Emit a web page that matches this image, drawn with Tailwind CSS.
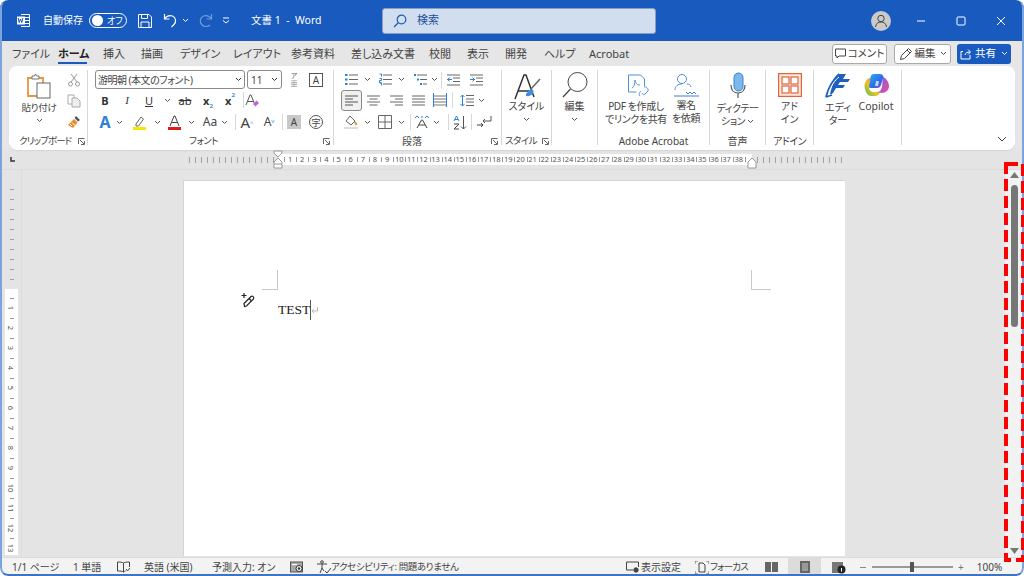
<!DOCTYPE html>
<html lang="ja">
<head>
<meta charset="utf-8">
<title>文書 1 - Word</title>
<script src="https://cdn.jsdelivr.net/npm/@tailwindcss/browser@4"></script>
</head>
<body class="bg-white">
<div class="relative w-[1024px] h-[576px] overflow-hidden flex flex-col bg-[#e4e4e4] rounded-[8px] font-['Noto_Sans','Noto_Sans_CJK_JP',sans-serif] [font-feature-settings:'palt'] text-[#444]">

  <!-- title bar -->
  <header class="h-[41px] shrink-0 flex items-center bg-[#185abd] rounded-t-[8px] text-white text-[10px]">
    <svg class="ml-[16px] w-[15px] h-[15px]" viewBox="0 0 15 15" fill="none" stroke="#fff"><path d="M5 1.500h8.500v12H5"/><path d="M9 4.500h4M9 7.500h4M9 10.500h4"/><rect x="1" y="3.500" width="8" height="8" fill="#fff" stroke="none"/><path d="M2.200 5l1 4.500 1.300-3.500 1.300 3.500 1-4.500" stroke="#185abd"/></svg>
    <span class="ml-[12px] w-[46px] whitespace-nowrap">自動保存</span>
    <span class="w-[38px] h-[15px] rounded-full border border-white flex items-center pl-[2px] gap-[4px]"><span class="w-[11px] h-[11px] rounded-full bg-white"></span><span class="text-[9px] leading-none">オフ</span></span>
    <svg class="ml-[11px] w-[14px] h-[14px]" viewBox="0 0 14 14" fill="none" stroke="#fff"><path d="M.5.5h10.500l2.500 2.500v10.500h-13z"/><path d="M3.500.5v4h6v-4M3 13.500v-5.500h8v5.500"/></svg>
    <svg class="ml-[11px] w-[16px] h-[15px]" viewBox="0 0 16 15" fill="none" stroke="#fff" stroke-width="1.200"><path d="M1.500 1v5h5"/><path d="M1.500 6c2-3 5-4 8-3 3.500 1.500 4 6 1.500 8.500l-2.500 2.500"/></svg>
    <svg class="ml-[3px] w-[7px] h-[5px]" viewBox="0 0 7 5" fill="none" stroke="#fff"><path d="M1 1l2.500 2.500L6 1"/></svg>
    <svg class="ml-[8px] w-[16px] h-[15px] opacity-40" viewBox="0 0 16 15" fill="none" stroke="#fff" stroke-width="1.200"><path d="M14.500 1v5h-5"/><path d="M14.500 6c-2-3-5-4-8-3-3.500 1.500-4.500 6-1.500 9 2 2 6 2 8 0"/></svg>
    <svg class="ml-[9px] w-[8px] h-[7px]" viewBox="0 0 8 7" fill="none" stroke="#fff"><path d="M1 1h6"/><path d="M1 3.500l3 2.500 3-2.500"/></svg>
    <span class="ml-[21px] w-[131px] text-[10.500px] whitespace-nowrap">文書 1&nbsp; -&nbsp; Word</span>
    <div class="w-[274px] h-[26px] flex items-center rounded-[3px] bg-[#d1deef] border border-[#8a9fc0] text-[#1d4e9a] text-[11px]">
      <svg class="ml-[10px] w-[14px] h-[14px]" viewBox="0 0 14 14" fill="none" stroke="#1d5bb5" stroke-width="1.200"><circle cx="8.500" cy="5.500" r="4.300"/><path d="M5.500 8.500L1 13"/></svg>
      <span class="ml-[10px]">検索</span>
    </div>
    <div class="ml-[215px] w-[20px] h-[20px] rounded-full bg-[#cacaca] flex items-center justify-center">
      <svg class="w-[14px] h-[14px]" viewBox="0 0 14 14" fill="none" stroke="#444"><circle cx="7" cy="4.500" r="3.200"/><path d="M1.500 13c.5-3.500 2.500-5 5.500-5s5 1.500 5.500 5"/></svg>
    </div>
    <svg class="ml-[25px] w-[10px] h-[10px]" viewBox="0 0 10 10" stroke="#fff"><path d="M1 5h8"/></svg>
    <svg class="ml-[30px] w-[10px] h-[10px]" viewBox="0 0 10 10" fill="none" stroke="#fff"><rect x="1" y="1" width="8" height="8" rx="1"/></svg>
    <svg class="ml-[30px] w-[10px] h-[10px]" viewBox="0 0 10 10" stroke="#fff"><path d="M1 1l8 8M9 1l-8 8"/></svg>
  </header>

  <!-- tabs -->
  <nav class="h-[25px] shrink-0 flex items-center bg-[#e6e6e6] pl-[12px] pr-[13px] text-[11px] whitespace-nowrap">
    <span class="w-[46px] pt-[1px]">ファイル</span>
    <span class="w-[45px] pt-[1px] font-bold text-[#222] relative">ホーム<span class="absolute left-0 top-[17px] w-[29px] h-[2px] bg-[#185abd]"></span></span>
    <span class="w-[38px] pt-[1px]">挿入</span>
    <span class="w-[39px] pt-[1px]">描画</span>
    <span class="w-[53px] pt-[1px]">デザイン</span>
    <span class="w-[58px] pt-[1px]">レイアウト</span>
    <span class="w-[60px] pt-[1px]">参考資料</span>
    <span class="w-[78px] pt-[1px]">差し込み文書</span>
    <span class="w-[38px] pt-[1px]">校閲</span>
    <span class="w-[38px] pt-[1px]">表示</span>
    <span class="w-[39px] pt-[1px]">開発</span>
    <span class="w-[45px] pt-[1px]">ヘルプ</span>
    <span class="w-[50px] pt-[1px]">Acrobat</span>
    <div class="ml-auto flex items-center text-[10.500px]">
      <span class="w-[55px] h-[20px] rounded-[3px] border border-[#aaa] bg-white flex items-center justify-center gap-[2px]">
        <svg class="w-[11px] h-[11px]" viewBox="0 0 11 11" fill="none" stroke="#444"><path d="M.5 1h10v7H4L2 10V8H.5z"/></svg>コメント
      </span>
      <span class="ml-[7px] w-[57px] h-[20px] rounded-[3px] border border-[#aaa] bg-white flex items-center justify-center gap-[2px]">
        <svg class="w-[14px] h-[14px]" viewBox="0 0 14 14" fill="none" stroke="#444"><path d="M1.500 12.500l1-4 7-7 3 3-7 7z"/><path d="M8 3l3 3"/></svg>編集
        <svg class="ml-[2px] w-[7px] h-[5px]" viewBox="0 0 7 5" fill="none" stroke="#444"><path d="M1 1l2.500 2.500L6 1"/></svg>
      </span>
      <span class="ml-[6px] w-[54px] h-[20px] rounded-[3px] bg-[#185abd] text-white flex items-center justify-center gap-[3px]">
        <svg class="w-[12px] h-[12px]" viewBox="0 0 12 12" fill="none" stroke="#fff"><path d="M3 3.500H1v7.500h9V7"/><path d="M5 7c.5-2 2-3 5-3M8 1.500L10.500 4 8 6.500"/></svg>共有
        <svg class="ml-[2px] w-[7px] h-[5px]" viewBox="0 0 7 5" fill="none" stroke="#fff"><path d="M1 1l2.500 2.500L6 1"/></svg>
      </span>
    </div>
  </nav>

  <!-- ribbon -->
  <div class="h-[84px] shrink-0 bg-[#e6e6e6] px-[9px]">
    <section class="relative h-[84px] rounded-[8px] bg-white pt-[4px] flex text-[10px] leading-none shadow-[0_1px_1px_#d5d5d5]">

      <!-- clipboard -->
      <div class="w-[79px] h-[75px] border-r border-[#d8d8d8] flex flex-col">
        <div class="flex flex-1">
          <div class="w-[60px] flex flex-col items-center">
            <svg class="w-[26px] h-[26px] mt-[3px]" viewBox="0 0 26 26" fill="none"><path d="M2 5h15v18H2z" stroke="#e8953f" stroke-width="1.800"/><path d="M6 5V3h2.500l1-2 1 2H13v3H6z" stroke="#777" fill="#fff"/><rect x="11" y="10" width="13" height="15" fill="#fff" stroke="#666"/></svg>
            <span class="mt-[4px] text-[9.500px] tracking-[-0.300px] whitespace-nowrap">貼り付け</span>
            <svg class="mt-[5px] w-[7px] h-[5px]" viewBox="0 0 7 5" fill="none" stroke="#555"><path d="M1 1l2.500 2.500L6 1"/></svg>
          </div>
          <div class="-ml-[2px] w-[14px] flex flex-col items-center pt-[3px] gap-[7px]">
            <svg class="w-[14px] h-[14px]" viewBox="0 0 14 14" fill="none" stroke="#999"><path d="M4 1l6 8M10 1L4 9"/><circle cx="3.500" cy="11" r="2"/><circle cx="10.500" cy="11" r="2"/></svg>
            <svg class="w-[14px] h-[14px]" viewBox="0 0 14 14" fill="none" stroke="#aaa"><path d="M1 1h6v9H1z"/><path d="M5 4h5l3 3v6H5z" fill="#eee"/></svg>
            <svg class="w-[14px] h-[14px]" viewBox="0 0 14 14"><path d="M9 1l4 4-2 1.500L7.500 3z" fill="#555"/><path d="M7 4l3.500 3.500L6 13 1 10z" fill="#ec8a2e"/><path d="M3 9l2 2M5 7.500l3 3" stroke="#fff"/></svg>
          </div>
        </div>
        <div class="h-[10px] -mb-[1px] flex items-center pl-[10px] whitespace-nowrap text-[9.500px] tracking-[-0.900px]">クリップボード
          <svg class="ml-auto mr-[2px] w-[7px] h-[7px]" viewBox="0 0 7 7" fill="none" stroke="#666"><path d="M.5 6V.5H6.500M2 2l4 4M6.500 3v3.500H3"/></svg>
        </div>
      </div>

      <!-- font -->
      <div class="w-[246px] h-[75px] border-r border-[#d8d8d8] flex flex-col">
        <div class="h-[19px] flex items-center pl-[7px] text-[10px]">
          <span class="w-[150px] h-[19px] rounded-[3px] border border-[#8a8a8a] flex items-center pl-[2px] whitespace-nowrap tracking-[-0.500px]">游明朝 (本文のフォント)<svg class="ml-auto mr-[2px] w-[7px] h-[5px]" viewBox="0 0 7 5" fill="none" stroke="#333"><path d="M1 1l2.500 2.500L6 1"/></svg></span>
          <span class="ml-[2px] w-[35px] h-[19px] rounded-[3px] border border-[#8a8a8a] flex items-center pl-[3px]">11<svg class="ml-auto mr-[3px] w-[7px] h-[5px]" viewBox="0 0 7 5" fill="none" stroke="#333"><path d="M1 1l2.500 2.500L6 1"/></svg></span>
          <span class="ml-[6px] w-[12px] flex flex-col items-center text-[7px] leading-[8px] text-[#666]"><span>ア</span><span class="text-[#999]">亜</span></span>
          <span class="ml-[9px] w-[14px] h-[14px] border border-[#555] text-[10px] flex items-center justify-center">A</span>
        </div>
        <div class="h-[22px] flex items-center pl-[6px] text-[11px] text-[#333]">
          <span class="w-[22px] text-center font-bold">B</span>
          <span class="w-[22px] text-center italic font-['Liberation_Serif',serif]">I</span>
          <span class="w-[22px] text-center underline">U</span>
          <span class="w-[14px] flex justify-center"><svg class="w-[7px] h-[5px]" viewBox="0 0 7 5" fill="none" stroke="#555"><path d="M1 1l2.500 2.500L6 1"/></svg></span>
          <span class="w-[22px] text-center line-through">ab</span>
          <span class="ml-[1px] w-[22px] text-center font-bold">x<sub class="text-[6px] text-[#3a8fe0] align-[-2px]">2</sub></span>
          <span class="w-[22px] text-center font-bold">x<sup class="text-[6px] text-[#3a8fe0] align-[5px]">2</sup></span>
          <span class="ml-[2px] w-[1px] h-[16px] bg-[#d8d8d8]"></span>
          <svg class="ml-[1px] w-[15px] h-[15px]" viewBox="0 0 15 15" fill="none"><path d="M1 12L5 2h1l4 10M2.500 8.500h6" stroke="#555"/><path d="M8 11l3.500-3.500 2.500 2.500L10.500 13.500z" fill="#c262d6"/></svg>
        </div>
        <div class="h-[22px] flex items-center pl-[6px] text-[11px]">
          <span class="w-[22px] text-center text-[16px] font-bold text-[#2f80d8]">A</span>
          <svg class="w-[7px] h-[5px]" viewBox="0 0 7 5" fill="none" stroke="#555"><path d="M1 1l2.500 2.500L6 1"/></svg>
          <span class="ml-[5px] w-[22px] flex justify-center"><svg class="w-[15px] h-[15px]" viewBox="0 0 15 15" fill="none"><path d="M4 9l5-7 2.500 2-5 7H4z" stroke="#666"/><rect x="1" y="12" width="13" height="3" fill="#f7e700"/></svg></span>
          <svg class="ml-[4px] w-[7px] h-[5px]" viewBox="0 0 7 5" fill="none" stroke="#555"><path d="M1 1l2.500 2.500L6 1"/></svg>
          <span class="ml-[2px] w-[22px] flex justify-center"><svg class="w-[15px] h-[15px]" viewBox="0 0 15 15" fill="none"><path d="M3 11l4-10h1l4 10M4.500 7.500h6" stroke="#444"/><rect x="1" y="12" width="13" height="3" fill="#d91c1c"/></svg></span>
          <svg class="ml-[3px] w-[7px] h-[5px]" viewBox="0 0 7 5" fill="none" stroke="#555"><path d="M1 1l2.500 2.500L6 1"/></svg>
          <span class="ml-[4px] w-[22px] text-center text-[12px]">Aa</span>
          <svg class="w-[7px] h-[5px]" viewBox="0 0 7 5" fill="none" stroke="#555"><path d="M1 1l2.500 2.500L6 1"/></svg>
          <span class="ml-[7px] w-[1px] h-[16px] bg-[#d8d8d8]"></span>
          <span class="w-[22px] text-center text-[15px] leading-none">A<sup class="text-[6px] text-[#3a8fe0]">^</sup></span>
          <span class="w-[22px] text-center text-[12px] leading-none">A<sup class="text-[6px] text-[#3a8fe0]">v</sup></span>
          <span class="ml-[2px] w-[1px] h-[16px] bg-[#d8d8d8]"></span>
          <span class="ml-[4px] w-[14px] h-[14px] bg-[#c8c8c8] flex items-center justify-center text-[10px]">A</span>
          <span class="ml-[8px] w-[14px] h-[14px] rounded-full border border-[#555] flex items-center justify-center text-[9px]">字</span>
        </div>
        <div class="h-[10px] -mb-[1px] flex items-center pl-[101px] whitespace-nowrap mt-auto text-[9.500px] tracking-[-0.500px]">フォント
          <svg class="ml-auto mr-[3px] w-[7px] h-[7px]" viewBox="0 0 7 7" fill="none" stroke="#666"><path d="M.5 6V.5H6.500M2 2l4 4M6.500 3v3.500H3"/></svg>
        </div>
      </div>

      <!-- paragraph -->
      <div class="w-[168px] h-[75px] border-r border-[#d8d8d8] flex flex-col">
        <div class="h-[19px] flex items-center pl-[6px]">
          <span class="w-[22px] flex justify-center"><svg class="w-[13px] h-[13px]" viewBox="0 0 13 13" stroke="#666"><path d="M4 2h9M4 6.500h9M4 11h9"/><path d="M0 2h2.500M0 6.500h2.500M0 11h2.500" stroke="#2f80d8" stroke-width="2"/></svg></span>
          <svg class="ml-[2px] w-[7px] h-[5px]" viewBox="0 0 7 5" fill="none" stroke="#555"><path d="M1 1l2.500 2.500L6 1"/></svg>
          <span class="ml-[3px] w-[22px] flex justify-center"><svg class="w-[13px] h-[13px]" viewBox="0 0 13 13" stroke="#666"><path d="M4 2h9M4 6.500h9M4 11h9"/><path d="M.5 1h2v2.500M.5 5.500h2v2h-2v2h2M.5 10h2v2.500" stroke="#2f80d8" fill="none"/></svg></span>
          <svg class="ml-[2px] w-[7px] h-[5px]" viewBox="0 0 7 5" fill="none" stroke="#555"><path d="M1 1l2.500 2.500L6 1"/></svg>
          <span class="ml-[4px] w-[22px] flex justify-center"><svg class="w-[13px] h-[13px]" viewBox="0 0 13 13" stroke="#666"><path d="M3 2h10M6 6.500h7M9 11h4"/><path d="M0 2h2M3 6.500h2M6 11h2" stroke="#2f80d8" stroke-width="2"/></svg></span>
          <svg class="w-[7px] h-[5px]" viewBox="0 0 7 5" fill="none" stroke="#555"><path d="M1 1l2.500 2.500L6 1"/></svg>
          <span class="ml-[3px] w-[1px] h-[16px] bg-[#d8d8d8]"></span>
          <span class="w-[22px] flex justify-center"><svg class="w-[13px] h-[12px]" viewBox="0 0 13 12" stroke="#666" fill="none"><path d="M0 1h13M6 4h7M6 7.500h7M0 11h13"/><path d="M5 5.500H0M2.500 3.500L.5 5.500l2 2" stroke="#2f80d8"/></svg></span>
          <span class="ml-[1px] w-[22px] flex justify-center"><svg class="w-[13px] h-[12px]" viewBox="0 0 13 12" stroke="#666" fill="none"><path d="M0 1h13M6 4h7M6 7.500h7M0 11h13"/><path d="M0 5.500h5M2.500 3.500l2 2-2 2" stroke="#2f80d8"/></svg></span>
        </div>
        <div class="h-[22px] flex items-center pl-[7px]">
          <span class="w-[21px] h-[21px] rounded-[3px] border border-[#8a8a8a] bg-[#f0f0f0] flex justify-center items-center"><svg class="w-[13px] h-[11px]" viewBox="0 0 13 11" stroke="#555"><path d="M0 1h13M0 4h8M0 7h13M0 10h8"/></svg></span>
          <span class="w-[22px] flex justify-center"><svg class="w-[13px] h-[11px]" viewBox="0 0 13 11" stroke="#666"><path d="M0 1h13M2.500 4h8M0 7h13M2.500 10h8"/></svg></span>
          <span class="ml-[1px] w-[22px] flex justify-center"><svg class="w-[13px] h-[11px]" viewBox="0 0 13 11" stroke="#666"><path d="M0 1h13M5 4h8M0 7h13M5 10h8"/></svg></span>
          <span class="w-[22px] flex justify-center"><svg class="w-[13px] h-[11px]" viewBox="0 0 13 11" stroke="#666"><path d="M0 1h13M0 4h13M0 7h13M0 10h13"/></svg></span>
          <span class="w-[22px] flex justify-center"><svg class="w-[14px] h-[14px]" viewBox="0 0 14 14" stroke="#2f80d8" fill="none"><path d="M.5 0v14M13.500 0v14"/><path d="M1 3h12M1 6h12M1 9h12M1 12h12" stroke="#777"/></svg></span>
          <span class="ml-[1px] w-[1px] h-[16px] bg-[#d8d8d8]"></span>
          <span class="ml-[3px] w-[22px] flex justify-center"><svg class="w-[14px] h-[13px]" viewBox="0 0 14 13" fill="none" stroke="#666"><path d="M6 1.500h8M6 5h8M6 8h8M6 11.500h8"/><path d="M2.500 1v11M.5 3l2-2 2 2M.5 10l2 2 2-2" stroke="#2f80d8"/></svg></span>
          <svg class="w-[7px] h-[5px]" viewBox="0 0 7 5" fill="none" stroke="#555"><path d="M1 1l2.500 2.500L6 1"/></svg>
        </div>
        <div class="h-[22px] flex items-center pl-[6px]">
          <span class="w-[22px] flex justify-center"><svg class="w-[14px] h-[14px]" viewBox="0 0 14 14" fill="none"><path d="M6 1l5 5-4 4-5-4z" stroke="#666"/><path d="M11 7l1.500 3" stroke="#e8912d" stroke-width="2"/><path d="M0 13h14" stroke="#bbb"/></svg></span>
          <svg class="ml-[2px] w-[7px] h-[5px]" viewBox="0 0 7 5" fill="none" stroke="#555"><path d="M1 1l2.500 2.500L6 1"/></svg>
          <span class="ml-[3px] w-[22px] flex justify-center"><svg class="w-[14px] h-[14px]" viewBox="0 0 14 14" fill="none" stroke="#666"><path d="M.5.5h13v13H.5zM7 .5v13M.5 7h13"/></svg></span>
          <svg class="ml-[2px] w-[7px] h-[5px]" viewBox="0 0 7 5" fill="none" stroke="#555"><path d="M1 1l2.500 2.500L6 1"/></svg>
          <span class="ml-[5px] w-[1px] h-[16px] bg-[#d8d8d8]"></span>
          <span class="w-[22px] flex justify-center"><svg class="w-[16px] h-[14px]" viewBox="0 0 16 14" fill="none"><path d="M3 13L7.500 5h1L13 13M5 10h6" stroke="#444"/><path d="M1 3l2-2 2 2M11 3l2-2 2 2M7 2h2" stroke="#2f80d8"/></svg></span>
          <svg class="w-[7px] h-[5px]" viewBox="0 0 7 5" fill="none" stroke="#555"><path d="M1 1l2.500 2.500L6 1"/></svg>
          <span class="ml-[8px] w-[1px] h-[16px] bg-[#d8d8d8]"></span>
          <span class="w-[22px] flex justify-center relative"><svg class="w-[14px] h-[15px]" viewBox="0 0 14 15" fill="none"><path d="M1 6L3.500 1 6 6M1.800 4.500h3.400" stroke="#2f80d8"/><path d="M1 9h5l-5 5h5" stroke="#444"/><path d="M10.500 1v13M8 11.500l2.500 2.500 2.500-2.500" stroke="#555"/></svg></span>
          <span class="w-[1px] h-[16px] bg-[#d8d8d8]"></span>
          <span class="ml-[1px] w-[22px] flex justify-center"><svg class="w-[15px] h-[14px]" viewBox="0 0 15 14" fill="none" stroke="#555"><path d="M14 1v5H6M8 4L6 6l2 2"/><path d="M0 10h6M4 8l2 2-2 2" stroke="#444"/></svg></span>
        </div>
        <div class="h-[10px] -mb-[1px] flex items-center pl-[68px] whitespace-nowrap mt-auto">段落
          <svg class="ml-auto mr-[3px] w-[7px] h-[7px]" viewBox="0 0 7 7" fill="none" stroke="#666"><path d="M.5 6V.5H6.500M2 2l4 4M6.500 3v3.500H3"/></svg>
        </div>
      </div>

      <!-- styles -->
      <div class="w-[50px] h-[75px] border-r border-[#d8d8d8] flex flex-col">
        <div class="flex-1 flex flex-col items-center">
          <svg class="mt-[4px] w-[28px] h-[26px]" viewBox="0 0 28 26" fill="none"><path d="M2 25L11 1h2l8 22M5.500 17H18" stroke="#333" stroke-width="1.500"/><path d="M27 5L18 15" stroke="#666" stroke-width="1.500"/><path d="M13 20c3-4 5-6 7-4 2 2-2 7-7 6z" fill="#3f8fe0"/></svg>
          <span class="mt-[1px]">スタイル</span>
          <svg class="mt-[6px] w-[7px] h-[5px]" viewBox="0 0 7 5" fill="none" stroke="#555"><path d="M1 1l2.500 2.500L6 1"/></svg>
        </div>
        <div class="h-[10px] -mb-[1px] flex items-center pl-[3px] whitespace-nowrap text-[9.500px] tracking-[-0.500px]">スタイル
          <svg class="ml-auto mr-[2px] w-[7px] h-[7px]" viewBox="0 0 7 7" fill="none" stroke="#666"><path d="M.5 6V.5H6.500M2 2l4 4M6.500 3v3.500H3"/></svg>
        </div>
      </div>

      <!-- edit -->
      <div class="w-[46px] h-[75px] border-r border-[#d8d8d8] flex flex-col items-center">
        <svg class="mt-[2px] w-[26px] h-[26px]" viewBox="0 0 26 26" fill="none" stroke="#444"><circle cx="15.500" cy="10" r="9.500"/><path d="M8.500 17L1 25" stroke-width="1.300"/></svg>
        <span class="mt-[3px]">編集</span>
        <svg class="mt-[6px] w-[7px] h-[5px]" viewBox="0 0 7 5" fill="none" stroke="#555"><path d="M1 1l2.500 2.500L6 1"/></svg>
      </div>

      <!-- acrobat -->
      <div class="w-[112px] h-[75px] border-r border-[#d8d8d8] flex flex-col">
        <div class="flex-1 flex leading-[13px] tracking-[-0.400px]">
          <div class="w-[76px] flex flex-col items-center">
            <svg class="mt-[4px] ml-[6px] w-[24px] h-[24px]" viewBox="0 0 24 24" fill="none" stroke="#4a90e2"><path d="M1.500 1h12l4 4v7M1.500 1v17h8"/><path d="M5 14c2-1 3-4 3-8 1 4 2 5 5 5"/><path d="M13 22c-2-2 0-4 1-5M17 13c2-1 5 2 4 4l-3 3c-1 1-3 0-3-1"/></svg>
            <span class="mt-[2px] whitespace-nowrap">PDF を作成し</span>
            <span class="whitespace-nowrap">でリンクを共有</span>
          </div>
          <div class="w-[24px] flex flex-col items-center">
            <svg class="mt-[3px] shrink-0 w-[27px] h-[25px]" viewBox="0 0 27 25" fill="none" stroke="#4a90e2"><circle cx="9" cy="6" r="4.500"/><path d="M2 17c0-4 3-6 7-6M14 11c2 0 4 1 4 3"/><path d="M13 19l2 2 2-2 2 2 2-2 2 2M1 23h25" stroke="#3b7fd0"/></svg>
            <span class="mt-[1px] whitespace-nowrap">署名</span>
            <span class="whitespace-nowrap">を依頼</span>
          </div>
        </div>
        <div class="h-[10px] -mb-[1px] text-center whitespace-nowrap">Adobe Acrobat</div>
      </div>

      <!-- voice -->
      <div class="w-[56px] h-[75px] border-r border-[#d8d8d8] flex flex-col">
        <div class="flex-1 flex flex-col items-center leading-[13px] tracking-[-0.500px]">
          <svg class="mt-[2px] w-[18px] h-[27px]" viewBox="0 0 18 27" fill="none"><rect x="5" y="1" width="9" height="18" rx="4.500" fill="#7db8ec" stroke="#3a80cc"/><path d="M2 13c0 5 3 8 7 8s7-3 7-8M9 21v5" stroke="#555" stroke-width="1.200"/></svg>
          <span class="mt-[3px] whitespace-nowrap">ディクテー</span>
          <span class="flex items-center gap-[2px] whitespace-nowrap">ション<svg class="w-[7px] h-[5px]" viewBox="0 0 7 5" fill="none" stroke="#555"><path d="M1 1l2.500 2.500L6 1"/></svg></span>
        </div>
        <div class="h-[10px] -mb-[1px] text-center">音声</div>
      </div>

      <!-- addin -->
      <div class="w-[48px] h-[75px] border-r border-[#d8d8d8] flex flex-col">
        <div class="flex-1 flex flex-col items-center leading-[13px]">
          <svg class="mt-[3px] w-[24px] h-[24px]" viewBox="0 0 24 24" fill="none" stroke="#e2643c" stroke-width="1.200"><rect x=".6" y=".6" width="22.800" height="22.800" fill="#fbe6dc"/><rect x="4" y="4" width="7" height="7" fill="#fff"/><rect x="13" y="4" width="7" height="7" fill="#fff"/><rect x="4" y="13" width="7" height="7" fill="#fff"/><rect x="13" y="13" width="7" height="7" fill="#fff"/></svg>
          <span class="mt-[3px] whitespace-nowrap">アド</span>
          <span class="whitespace-nowrap">イン</span>
        </div>
        <div class="h-[10px] -mb-[1px] text-center whitespace-nowrap tracking-[-0.500px]">アドイン</div>
      </div>

      <!-- editor & copilot -->
      <div class="w-[88px] h-[75px] border-r border-[#d8d8d8] flex leading-[13px]">
        <div class="w-[48px] flex flex-col items-center">
          <svg class="mt-[2px] w-[28px] h-[27px]" viewBox="0 0 28 27" fill="none"><path d="M2 25C4 17 9 8 15 2" stroke="#1f5fbf" stroke-width="1.800"/><path d="M2 25l6-2" stroke="#1f5fbf" stroke-width="1.800"/><path d="M15 2h7l-3 5h7l-2 3h-8l-2 3h7l-2 3h-7l-3 5c-1 1-2 1-3 1 2-9 5-16 9-20z" fill="#1f5fbf"/><path d="M5 20C7 14 11 8 15 5" stroke="#fff"/></svg>
          <span class="mt-[2px] whitespace-nowrap">エディ</span>
          <span class="whitespace-nowrap">ター</span>
        </div>
        <div class="flex flex-col items-center w-[28px]">
          <svg class="mt-[3px] shrink-0 w-[25px] h-[24px]" viewBox="0 0 25 24">
            <defs>
              <linearGradient id="cpa" x1="0" y1="0" x2="1" y2="1"><stop offset="0" stop-color="#27b4f5"/><stop offset=".6" stop-color="#2a6be8"/><stop offset="1" stop-color="#8a4fe0"/></linearGradient>
              <linearGradient id="cpb" x1="0" y1="1" x2="1" y2="0"><stop offset="0" stop-color="#3fc25a"/><stop offset=".45" stop-color="#f4c020"/><stop offset="1" stop-color="#f0557a"/></linearGradient>
              <linearGradient id="cpc" x1="0" y1="0" x2="1" y2="1"><stop offset="0" stop-color="#7a5ae8"/><stop offset="1" stop-color="#e8509a"/></linearGradient>
            </defs>
            <path d="M10 1h6c2 0 3 1 3.500 3L17 12c-.5 2-2 3-4 3H7c-2 0-3-1-2.500-3l2-8C7 2 8 1 10 1z" fill="url(#cpa)"/>
            <path d="M1 16C-.5 11 2 6 6 5c1 3-1 6-1 9 0 3 2 5 5 5h6c-1 3-3 4-5 4H7c-3 0-5-3-6-7z" fill="url(#cpb)"/>
            <path d="M19 4c3 1 6 5 6 9 0 4-3 7-7 7l-5-1c3 0 4-2 5-5z" fill="url(#cpc)"/>
            <path d="M15 8h-3l-1 5h3z" fill="#fff" opacity=".7"/>
          </svg>
          <span class="mt-[3px] text-[10.500px]">Copilot</span>
        </div>
      </div>

      <svg class="absolute right-[8px] top-[70px] w-[10px] h-[7px]" viewBox="0 0 10 7" fill="none" stroke="#444"><path d="M1 1l4 4 4-4"/></svg>
    </section>
  </div>

  <!-- horizontal ruler -->
  <div class="relative h-[20px] shrink-0 flex items-center border-b border-[#dcdcdc] pr-[20px]">
    <div class="w-[22px] h-full flex items-center pl-[10px]"><svg class="w-[5px] h-[5px] -mt-[1px]" viewBox="0 0 5 5" fill="none" stroke="#333" stroke-width="1.500"><path d="M1 0v4h4"/></svg></div>
    <div class="ml-[162px] w-[94px] h-[6px] [background-image:repeating-linear-gradient(90deg,transparent_0_5px,#a0a0a0_5px_6px)]"></div>
    <div class="relative w-[474px] h-[11px] bg-white flex pl-[6px] text-[7.500px] leading-[11px] text-[#555]">
      <div class="absolute left-[6px] top-[3px] right-0 h-[5px] [background-image:repeating-linear-gradient(90deg,#999_0_1px,transparent_1px_12.130px)]"></div>
      <span class="relative w-[12.130px] text-center bg-white/0">1</span><span class="relative w-[12.130px] text-center">2</span><span class="relative w-[12.130px] text-center">3</span><span class="relative w-[12.130px] text-center">4</span><span class="relative w-[12.130px] text-center">5</span><span class="relative w-[12.130px] text-center">6</span><span class="relative w-[12.130px] text-center">7</span><span class="relative w-[12.130px] text-center">8</span><span class="relative w-[12.130px] text-center">9</span><span class="relative w-[12.130px] text-center">10</span><span class="relative w-[12.130px] text-center">11</span><span class="relative w-[12.130px] text-center">12</span><span class="relative w-[12.130px] text-center">13</span><span class="relative w-[12.130px] text-center">14</span><span class="relative w-[12.130px] text-center">15</span><span class="relative w-[12.130px] text-center">16</span><span class="relative w-[12.130px] text-center">17</span><span class="relative w-[12.130px] text-center">18</span><span class="relative w-[12.130px] text-center">19</span><span class="relative w-[12.130px] text-center">20</span><span class="relative w-[12.130px] text-center">21</span><span class="relative w-[12.130px] text-center">22</span><span class="relative w-[12.130px] text-center">23</span><span class="relative w-[12.130px] text-center">24</span><span class="relative w-[12.130px] text-center">25</span><span class="relative w-[12.130px] text-center">26</span><span class="relative w-[12.130px] text-center">27</span><span class="relative w-[12.130px] text-center">28</span><span class="relative w-[12.130px] text-center">29</span><span class="relative w-[12.130px] text-center">30</span><span class="relative w-[12.130px] text-center">31</span><span class="relative w-[12.130px] text-center">32</span><span class="relative w-[12.130px] text-center">33</span><span class="relative w-[12.130px] text-center">34</span><span class="relative w-[12.130px] text-center">35</span><span class="relative w-[12.130px] text-center">36</span><span class="relative w-[12.130px] text-center">37</span><span class="relative w-[12.130px] text-center">38</span>
    </div>
    <div class="w-[93px] h-[6px] [background-image:repeating-linear-gradient(90deg,transparent_0_5px,#a0a0a0_5px_6px)]"></div>
    <svg class="absolute left-[272px] top-[0px] w-[12px] h-[20px]" viewBox="0 0 12 20" fill="#fff" stroke="#999"><path d="M2 1h8v2L6 7 2 3z"/><path d="M6 8l4 4v6H2v-6z"/><path d="M2 14h8"/></svg>
    <svg class="absolute left-[746px] top-[0px] w-[12px] h-[20px]" viewBox="0 0 12 20" fill="#fff" stroke="#999"><path d="M6 8l4 4v6H2v-6z"/></svg>
  </div>

  <!-- body -->
  <div class="flex-1 min-h-0 flex">
    <!-- vertical ruler -->
    <div class="w-[22px] shrink-0 border-r border-[#dcdcdc] pl-[5px] pr-[3px] pt-[15px] text-[7.500px] leading-[10px] text-[#555] overflow-hidden">
      <div class="h-[104px] bg-[repeating-linear-gradient(180deg,transparent_0_4px,#a0a0a0_4px_5px,transparent_5px_10px)] bg-[length:4px_100%] bg-center bg-no-repeat"></div>
      <div class="h-[266px] bg-white pt-[4px] flex flex-col items-center">
        <span class="h-[10px] w-[4px] flex items-center"><span class="w-[4px] h-[1px] bg-[#999]"></span></span><span class="h-[10px] rotate-90">1</span>
        <span class="h-[10px] w-[4px] flex items-center"><span class="w-[4px] h-[1px] bg-[#999]"></span></span><span class="h-[10px] rotate-90">2</span>
        <span class="h-[10px] w-[4px] flex items-center"><span class="w-[4px] h-[1px] bg-[#999]"></span></span><span class="h-[10px] rotate-90">3</span>
        <span class="h-[10px] w-[4px] flex items-center"><span class="w-[4px] h-[1px] bg-[#999]"></span></span><span class="h-[10px] rotate-90">4</span>
        <span class="h-[10px] w-[4px] flex items-center"><span class="w-[4px] h-[1px] bg-[#999]"></span></span><span class="h-[10px] rotate-90">5</span>
        <span class="h-[10px] w-[4px] flex items-center"><span class="w-[4px] h-[1px] bg-[#999]"></span></span><span class="h-[10px] rotate-90">6</span>
        <span class="h-[10px] w-[4px] flex items-center"><span class="w-[4px] h-[1px] bg-[#999]"></span></span><span class="h-[10px] rotate-90">7</span>
        <span class="h-[10px] w-[4px] flex items-center"><span class="w-[4px] h-[1px] bg-[#999]"></span></span><span class="h-[10px] rotate-90">8</span>
        <span class="h-[10px] w-[4px] flex items-center"><span class="w-[4px] h-[1px] bg-[#999]"></span></span><span class="h-[10px] rotate-90">9</span>
        <span class="h-[10px] w-[4px] flex items-center"><span class="w-[4px] h-[1px] bg-[#999]"></span></span><span class="h-[10px] rotate-90">10</span>
        <span class="h-[10px] w-[4px] flex items-center"><span class="w-[4px] h-[1px] bg-[#999]"></span></span><span class="h-[10px] rotate-90">11</span>
        <span class="h-[10px] w-[4px] flex items-center"><span class="w-[4px] h-[1px] bg-[#999]"></span></span><span class="h-[10px] rotate-90">12</span>
        <span class="h-[10px] w-[4px] flex items-center"><span class="w-[4px] h-[1px] bg-[#999]"></span></span><span class="h-[10px] rotate-90">13</span>
      </div>
    </div>
    <!-- document -->
    <main class="flex-1 min-w-0 pl-[161px] pt-[10px]">
      <article class="relative w-[662px] h-[376px] bg-white border-l border-t border-[#d4d4d4]">
        <span class="absolute left-[78px] top-[89px] w-[16px] h-[20px] border-r border-b border-[#c8c8c8]"></span>
        <span class="absolute left-[567px] top-[89px] w-[20px] h-[20px] border-l border-b border-[#c8c8c8]"></span>
        <svg class="absolute left-[57px] top-[111px] w-[16px] h-[16px]" viewBox="0 0 16 16" fill="none" stroke="#222" stroke-width="1.200"><path d="M3.500 14.500l-.5-3 7-7c1.500-1 3.500.5 2.500 2.500l-7 7z"/><path d="M8 6.500l2.500 2.500"/><path d="M3 1v5M.5 3.500h5"/></svg>
        <p class="absolute left-[94px] top-[119px] h-[20px] flex items-center font-['Liberation_Serif',serif] text-[13.500px] text-[#222] [font-feature-settings:normal]">TEST<span class="w-[1px] h-[20px] bg-[#555]"></span><svg class="w-[7px] h-[7px]" viewBox="0 0 7 7" fill="none" stroke="#bbb"><path d="M6.500 0v4H1M3 2L1 4l2 2"/></svg></p>
      </article>
    </main>
    <!-- scrollbar -->
    <aside class="w-[19px] shrink-0 bg-[#f2f2f2] flex flex-col items-center pt-[3px] pb-[3px] pr-[1px] mt-[-1px]">
      <svg class="w-[9px] h-[6px]" viewBox="0 0 9 6" fill="#777"><path d="M4.500 0L9 6H0z"/></svg>
      <span class="mt-[7px] w-[7px] h-[142px] rounded-full bg-[#777]"></span>
      <svg class="mt-auto w-[9px] h-[6px]" viewBox="0 0 9 6" fill="#777"><path d="M4.500 6L9 0H0z"/></svg>
    </aside>
  </div>

  <!-- status bar -->
  <footer class="h-[19px] shrink-0 flex items-center bg-[#f3f3f3] border-t border-[#dcdcdc] text-[10px] text-[#444] whitespace-nowrap">
    <span class="ml-[12px] w-[61px]">1/1 ページ</span>
    <span class="w-[44px]">1 単語</span>
    <svg class="w-[13px] h-[12px]" viewBox="0 0 13 12" fill="none" stroke="#444"><path d="M6.500 2C5 1 3 1 .5 1v9c3 0 4.500 0 6 1 1-.7 1.500-.9 2-1M6.500 2c1.500-1 3.500-1 6-1v5M6.500 2v9"/><path d="M9 8l1.500 2L13 7"/></svg>
    <span class="ml-[14px] w-[68px]">英語 (米国)</span>
    <span class="w-[78px]">予測入力: オン</span>
    <svg class="w-[13px] h-[12px]" viewBox="0 0 13 12"><rect x=".5" y="1" width="12" height="10" fill="#aaa" stroke="#555"/><rect x="2" y="3" width="5" height="1" fill="#fff"/><circle cx="9" cy="7.500" r="3" fill="#fff" stroke="#333"/><circle cx="9" cy="7.500" r="1.300" fill="#333"/></svg>
    <svg class="ml-[14px] w-[14px] h-[14px]" viewBox="0 0 14 14" fill="none" stroke="#444"><circle cx="5" cy="2" r="1.300"/><path d="M0 4h10M5 4v4l-2 5M5 8l2 3"/><path d="M8 11l2 2 4-5"/></svg>
    <span class="text-[9.500px] w-[295px] tracking-[-0.400px]">アクセシビリティ: 問題ありません</span>
    <svg class="w-[13px] h-[12px]" viewBox="0 0 13 12" fill="none" stroke="#444"><path d="M7 9H.5V1h12v5"/><circle cx="10" cy="9" r="2.200" fill="#444"/></svg>
    <span class="ml-[2px] w-[54px]">表示設定</span>
    <svg class="w-[14px] h-[13px]" viewBox="0 0 14 13" fill="none" stroke="#444"><path d="M4 2h4l2 2v7H4z"/><path d="M0 3V0h3M14 3V0h-3M0 10v3h3M14 10v3h-3" stroke-width=".8"/></svg>
    <span class="ml-[1px] w-[55px] text-[9.500px] tracking-[-0.800px]">フォーカス</span>
    <svg class="w-[13px] h-[12px]" viewBox="0 0 13 12" fill="#666"><path d="M0 1h6v10H0zM7 1h6v10H7z"/></svg>
    <span class="ml-[10px] w-[33px] h-[18px] bg-[#dcdcdc] flex items-center justify-center"><svg class="w-[10px] h-[12px]" viewBox="0 0 10 12"><rect width="10" height="12" fill="#666"/><path d="M2 3h6M2 5h6M2 7h6M2 9h6" stroke="#ccc"/></svg></span>
    <svg class="ml-[11px] w-[14px] h-[13px]" viewBox="0 0 14 13"><rect y="1" width="11" height="11" fill="#777"/><circle cx="9.500" cy="8.500" r="4" fill="#222"/><path d="M9.500 7v3.500" stroke="#fff"/></svg>
    <span class="ml-[14px] w-[6px] h-[1px] bg-[#888]"></span>
    <span class="relative ml-[6px] w-[81px] h-[2px] bg-[#999]"><span class="absolute left-[38px] -top-[4px] w-[4px] h-[10px] bg-[#555]"></span></span>
    <span class="ml-[5px] text-[#777]">+</span>
    <span class="ml-[13px]">100%</span>
  </footer>

  <!-- window outline -->
  <div class="absolute inset-0 pointer-events-none rounded-[8px] border-x-2 border-b-2 border-x-[#7aa3e0] border-b-[#3f74c4]"></div>
  <!-- red annotation -->
  <svg class="absolute left-[1004px] top-[162px] w-[20px] h-[400px]" viewBox="0 0 20 400" fill="none" stroke="#ff0000" stroke-width="4"><rect x="2" y="2" width="17" height="396" stroke-dasharray="12 5"/></svg>
</div>
</body>
</html>
